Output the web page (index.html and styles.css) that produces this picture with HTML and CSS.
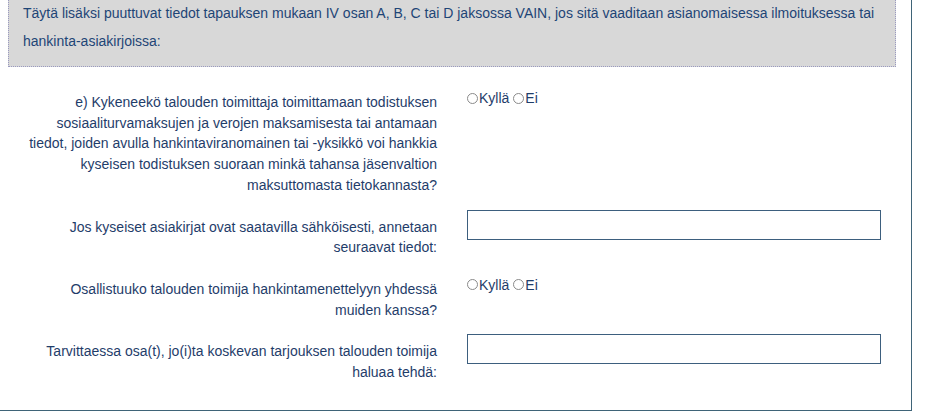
FILE: index.html
```html
<!DOCTYPE html>
<html lang="fi">
<head>
  <meta charset="UTF-8">
  <title>Osa IV</title>
  <link rel="stylesheet" href="styles.css">
</head>
<body>
  <div class="panel">

    <!-- ohje -->
    <div class="note">
      Täytä lisäksi puuttuvat tiedot tapauksen mukaan IV osan A, B, C tai D jaksossa VAIN, jos sitä vaaditaan asianomaisessa ilmoituksessa tai hankinta-asiakirjoissa:
    </div>

    <form class="fields">
      <div class="row">
        <label class="label">e) Kykeneekö talouden toimittaja toimittamaan todistuksen sosiaaliturvamaksujen ja verojen maksamisesta tai antamaan tiedot, joiden avulla hankintaviranomainen tai -yksikkö voi hankkia kyseisen todistuksen suoraan minkä tahansa jäsenvaltion maksuttomasta tietokannasta?</label>
        <div class="field radios">
          <label><input type="radio" name="q1" value="1">Kyllä</label>
          <label><input type="radio" name="q1" value="0">Ei</label>
        </div>
      </div>

      <div class="row">
        <label class="label">Jos kyseiset asiakirjat ovat saatavilla sähköisesti, annetaan seuraavat tiedot:</label>
        <div class="field"><input type="text" class="text"></div>
      </div>

      <div class="row">
        <label class="label">Osallistuuko talouden toimija hankintamenettelyyn yhdessä muiden kanssa?</label>
        <div class="field radios">
          <label><input type="radio" name="q2" value="1">Kyllä</label>
          <label><input type="radio" name="q2" value="0">Ei</label>
        </div>
      </div>

      <div class="row">
        <label class="label">Tarvittaessa osa(t), jo(i)ta koskevan tarjouksen talouden toimija haluaa tehdä:</label>
        <div class="field"><input type="text" class="text"></div>
      </div>
    </form>

  </div>
</body>
</html>
```

FILE: styles.css
```css
body { margin: 0; background: #fff; font-family: "Liberation Sans", Arial, sans-serif; font-size: 14px; color: #1f3d6a; }
.panel { display: flow-root; width: 912px; height: 411px; box-sizing: border-box; border-right: 1px solid #3f6478; border-bottom: 1px solid #3f6478; }
.note { margin: -10px 0 0 8px; width: 888px; box-sizing: border-box; padding: 8px 14px 11px; background: #d8d8d8; border: 1px dotted #9a9ac0; color: #1e4576; line-height: 28px; }
.fields { margin-top: 18px; }
.row { display: grid; grid-template-columns: 412px 414px; column-gap: 30px; padding-left: 25px; margin-bottom: 14px; align-items: start; }
.label { text-align: right; line-height: 20.7px; padding-top: 7px; }
.radios { display: flex; align-items: flex-start; gap: 4px; line-height: 16px; padding-top: 5px; }
.radios label { display: flex; align-items: center; }
.radios input { appearance: none; margin: 0 1px 0 0; width: 11px; height: 11px; border: 1px solid #8a8a8a; border-radius: 50%; background: #fff; }
.text { display: block; width: 414px; height: 30px; box-sizing: border-box; margin: 0; border: 1px solid #3d5f7e; padding: 4px 6px; font: inherit; }
```
